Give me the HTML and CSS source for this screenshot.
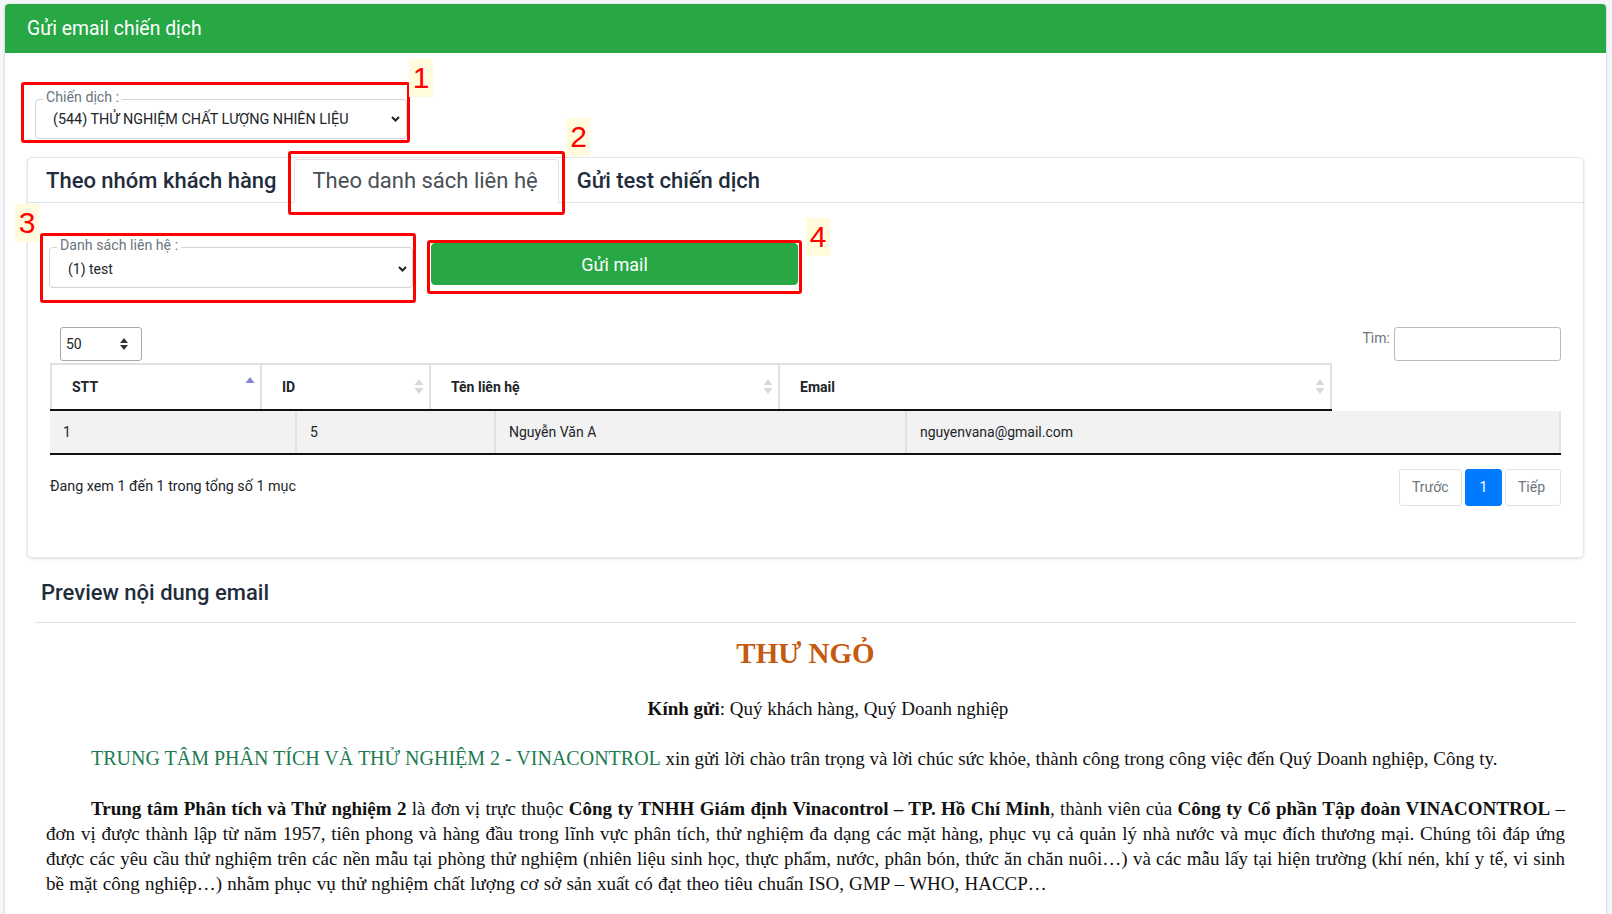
FILE: index.html
```html
<!DOCTYPE html>
<html lang="vi">
<head>
    <meta charset="UTF-8">
    <meta name="viewport" content="width=device-width, initial-scale=1.0">
    <title>Gửi email chiến dịch</title>
    <link rel="stylesheet" href="styles.css">
</head>
<body>
    <div class="wrapper">
        <div class="card card-main">
            <div class="card-header">Gửi email chiến dịch</div>

            <div class="card-body">
                <div class="mark mark-1">
                    <div class="field field-campaign">
                        <span class="field-label">Chiến dịch :</span>
                        <div class="fake-select">
                            <span>(544) THỬ NGHIỆM CHẤT LƯỢNG NHIÊN LIỆU</span>
                            <svg width="9" height="6" viewBox="0 0 9 6"><path d="M1 1 L4.5 4.5 L8 1" fill="none" stroke="#222" stroke-width="2"/></svg>
                        </div>
                    </div>
                    <span class="mark-num num-1">1</span>
                </div>

                <div class="card card-tabs">
                    <ul class="nav-tabs">
                        <li class="tab">Theo nhóm khách hàng</li>
                        <li class="tab active">
                            Theo danh sách liên hệ
                            <span class="mark-frame"></span>
                            <span class="mark-num num-2">2</span>
                        </li>
                        <li class="tab">Gửi test chiến dịch</li>
                    </ul>

                    <div class="tab-body">
                        <div class="send-row">
                            <div class="mark mark-3">
                                <div class="field field-list">
                                    <span class="field-label">Danh sách liên hệ :</span>
                                    <div class="fake-select">
                                        <span>(1) test</span>
                                        <svg width="9" height="6" viewBox="0 0 9 6"><path d="M1 1 L4.5 4.5 L8 1" fill="none" stroke="#222" stroke-width="2"/></svg>
                                    </div>
                                </div>
                                <span class="mark-num num-3">3</span>
                            </div>
                            <div class="mark mark-4">
                                <button class="btn-send">Gửi mail</button>
                                <span class="mark-num num-4">4</span>
                            </div>
                        </div>

                        <div class="dt-top">
                            <div class="dt-length">
                                <span>50</span>
                                <svg width="8" height="12" viewBox="0 0 8 12"><path d="M4 0 L8 5 L0 5Z M0 7 L8 7 L4 12Z" fill="#333"/></svg>
                            </div>
                            <div class="dt-search">
                                <label>Tìm:</label>
                                <div class="search-input"></div>
                            </div>
                        </div>

                        <div class="dt-head">
                            <div class="th th-stt">
                                <span>STT</span>
                                <svg class="sort-asc" width="10" height="16" viewBox="0 0 10 16"><path d="M5 1 L9.5 7 L0.5 7Z" fill="#8585d9"/></svg>
                            </div>
                            <div class="th th-id">
                                <span>ID</span>
                                <svg width="10" height="18" viewBox="0 0 10 18"><path d="M5 1 L9.5 7 L0.5 7Z M0.5 10 L9.5 10 L5 16Z" fill="#d8d8d8"/></svg>
                            </div>
                            <div class="th th-name">
                                <span>Tên liên hệ</span>
                                <svg width="10" height="18" viewBox="0 0 10 18"><path d="M5 1 L9.5 7 L0.5 7Z M0.5 10 L9.5 10 L5 16Z" fill="#d8d8d8"/></svg>
                            </div>
                            <div class="th th-email">
                                <span>Email</span>
                                <svg width="10" height="18" viewBox="0 0 10 18"><path d="M5 1 L9.5 7 L0.5 7Z M0.5 10 L9.5 10 L5 16Z" fill="#d8d8d8"/></svg>
                            </div>
                        </div>

                        <div class="dt-body">
                            <div class="td td-stt">1</div>
                            <div class="td td-id">5</div>
                            <div class="td td-name">Nguyễn Văn A</div>
                            <div class="td td-email">nguyenvana@gmail.com</div>
                        </div>

                        <div class="dt-bottom">
                            <div class="dt-info">Đang xem 1 đến 1 trong tổng số 1 mục</div>
                            <div class="pagination">
                                <span class="page prev">Trước</span>
                                <span class="page current">1</span>
                                <span class="page next">Tiếp</span>
                            </div>
                        </div>
                    </div>
                </div>

                <div class="preview">
                    <h3 class="preview-title">Preview nội dung email</h3>
                    <hr>
                    <div class="letter">
                        <h2 class="letter-title">THƯ NGỎ</h2>
                        <p class="greeting"><b>Kính gửi</b>: Quý khách hàng, Quý Doanh nghiệp</p>
                        <p class="indent"><span class="green">TRUNG TÂM PHÂN TÍCH VÀ THỬ NGHIỆM 2 - VINACONTROL</span> xin gửi lời chào trân trọng và lời chúc sức khỏe, thành công trong công việc đến Quý Doanh nghiệp, Công ty.</p>
                        <p class="indent intro"><b>Trung tâm Phân tích và Thử nghiệm 2</b> là đơn vị trực thuộc <b>Công ty TNHH Giám định Vinacontrol – TP. Hồ Chí Minh</b>, thành viên của <b>Công ty Cổ phần Tập đoàn VINACONTROL</b> – đơn vị được thành lập từ năm 1957, tiên phong và hàng đầu trong lĩnh vực phân tích, thử nghiệm đa dạng các mặt hàng, phục vụ cả quản lý nhà nước và mục đích thương mại. Chúng tôi đáp ứng được các yêu cầu thử nghiệm trên các nền mẫu tại phòng thử nghiệm (nhiên liệu sinh học, thực phẩm, nước, phân bón, thức ăn chăn nuôi…) và các mẫu lấy tại hiện trường (khí nén, khí y tế, vi sinh bề mặt công nghiệp…) nhằm phục vụ thử nghiệm chất lượng cơ sở sản xuất có đạt theo tiêu chuẩn ISO, GMP – WHO, HACCP…</p>
                    </div>
                </div>
            </div>
        </div>
    </div>
</body>
</html>
```

FILE: styles.css
```css
* {
    margin: 0;
    padding: 0;
    box-sizing: border-box;
}

body {
    font-family: Roboto, "Noto Sans", sans-serif;
    font-size: 14px;
    color: #212529;
    background: #f4f6f9;
}

.wrapper {
    padding: 4px 6px 0 5px;
}

.card-main {
    background: #fff;
    border-radius: 4px;
    box-shadow: 0 0 1px rgba(0, 0, 0, 0.125), 0 1px 3px rgba(0, 0, 0, 0.2);
    padding-bottom: 60px;
}

.card-header {
    height: 49px;
    line-height: 49px;
    padding-left: 22px;
    background: #28a745;
    color: #fff;
    font-size: 19.4px;
    border-radius: 4px 4px 0 0;
}

.card-body {
    padding: 29px 22px 0 22px;
}

/* red annotation frames */
.mark {
    position: relative;
    border: 3px solid #ff0000;
    border-radius: 3px;
}

.mark-num {
    position: absolute;
    width: 24px;
    height: 38px;
    line-height: 38px;
    text-align: center;
    background: #fffbdc;
    color: #ff0000;
    font-family: "Liberation Sans", Arial, sans-serif;
    font-size: 30px;
    font-weight: 400;
}

.mark-1 {
    width: 389px;
    margin-left: -6px;
    padding: 14px 0 1px 11px;
}

.num-1 { left: 385px; top: -26px; }
.num-2 { left: 271px; top: -42px; }
.num-3 { left: -28px; top: -32px; }
.num-4 { left: 376px; top: -25px; }

.field {
    position: relative;
    border: 1px solid #ced4da;
    border-radius: 4px;
}

.field-label {
    position: absolute;
    top: -11px;
    left: 7px;
    padding: 0 3px;
    background: #fff;
    color: #6c757d;
    font-size: 14.2px;
    line-height: 16px;
}

.fake-select {
    display: flex;
    align-items: center;
    justify-content: space-between;
    color: #212529;
    font-size: 14px;
}

.field-campaign {
    width: 372px;
    height: 40px;
}

.field-campaign .fake-select {
    height: 38px;
    padding: 0 6px 0 17px;
    font-size: 14.4px;
}

.field-list {
    width: 364px;
    height: 41px;
}

.field-list .fake-select {
    height: 39px;
    padding: 2px 5px 0 18px;
}

/* tabs card */
.card-tabs {
    margin-top: 14px;
    border: 1px solid #e3e6ea;
    border-radius: 5px;
    box-shadow: 0 1px 3px rgba(0, 0, 0, 0.12);
}

.nav-tabs {
    list-style: none;
    display: flex;
    padding-top: 1px;
    border-bottom: 1px solid #dee2e6;
}

.tab {
    position: relative;
    height: 44px;
    line-height: 42px;
    padding: 0 17px;
    margin-bottom: -1px;
    border: 1px solid transparent;
    border-bottom: none;
    font-size: 22px;
    font-weight: 500;
    color: #1f2d3d;
}

.tab.active {
    padding: 0 20px 0 17px;
    background: #fff;
    color: #495057;
    font-weight: 400;
    border-color: #dee2e6;
    border-radius: 4px 4px 0 0;
}

.mark-frame {
    position: absolute;
    left: -7px;
    right: -7px;
    top: -9px;
    bottom: -12px;
    border: 3px solid #ff0000;
    border-radius: 3px;
}

.tab-body {
    padding: 30px 22px 51px 22px;
}

.send-row {
    display: flex;
    align-items: flex-start;
    gap: 11px;
    margin-left: -10px;
}

.mark-3 {
    width: 376px;
    padding: 11px 0 12px 6px;
}

.mark-4 {
    width: 375px;
    margin-top: 7px;
    padding: 0 1px 6px 1px;
}

.btn-send {
    display: block;
    width: 100%;
    height: 42px;
    border: 1px solid #28a745;
    border-radius: 4px;
    background: #28a745;
    color: #fff;
    font-family: Roboto, sans-serif;
    font-size: 18px;
}

/* datatable */
.dt-top {
    display: flex;
    justify-content: space-between;
    align-items: flex-start;
    margin-top: 24px;
}

.dt-length {
    display: flex;
    align-items: center;
    justify-content: space-between;
    width: 82px;
    height: 34px;
    margin-left: 10px;
    padding: 0 13px 0 5px;
    border: 1px solid #aaa;
    border-radius: 3px;
}

.dt-search {
    display: flex;
    align-items: flex-start;
    gap: 4px;
}

.dt-search label {
    padding-top: 3px;
    color: #6c757d;
}

.search-input {
    width: 167px;
    height: 34px;
    border: 1px solid #b5bcc3;
    border-radius: 3px;
}

.dt-head {
    display: flex;
    width: 1282px;
    margin-top: 2px;
    border-top: 2px solid #dee2e6;
    border-bottom: 2px solid #111;
}

.th {
    display: flex;
    align-items: center;
    justify-content: space-between;
    height: 44px;
    padding: 0 5px 0 20px;
    border-left: 2px solid #dee2e6;
    font-weight: 700;
}

.th-stt { width: 210px; }
.th-id { width: 169px; }
.th-name { width: 349px; }
.th-email { width: 554px; border-right: 2px solid #dee2e6; }

.sort-asc {
    margin-top: -6px;
}

.dt-body {
    display: flex;
    background: #f2f2f2;
    border-bottom: 2px solid #111;
}

.td {
    height: 42px;
    line-height: 42px;
    padding-left: 13px;
    border-right: 2px solid #dee2e6;
}

.td-stt { width: 247px; }
.td-id { width: 199px; }
.td-name { width: 411px; }
.td-email { width: 654px; }

.dt-bottom {
    display: flex;
    justify-content: space-between;
    align-items: flex-start;
    margin-top: 14px;
}

.dt-info {
    padding-top: 7px;
    line-height: 21px;
    font-size: 14.3px;
}

.pagination {
    display: flex;
    gap: 3px;
}

.page {
    height: 37px;
    line-height: 35px;
    padding: 0 12px;
    border: 1px solid #dee2e6;
    border-radius: 3px;
    color: #6c757d;
}

.page.prev { width: 63px; }
.page.next { width: 56px; }

.page.current {
    width: 37px;
    text-align: center;
    padding: 0;
    background: #007bff;
    border-color: #007bff;
    color: #fff;
}

/* preview */
.preview {
    margin: 0 8px;
}

.preview-title {
    margin-top: 22px;
    padding-left: 6px;
    font-size: 22px;
    font-weight: 500;
    line-height: 26px;
    color: #1f2d3d;
}

.preview hr {
    margin-top: 16px;
    border: none;
    border-top: 1px solid #dee2e6;
}

.letter {
    padding: 0 11px;
    font-family: "Liberation Serif", "Times New Roman", serif;
    font-size: 19px;
    line-height: 25px;
    color: #111;
}

.letter-title {
    margin-top: 13px;
    text-align: center;
    font-size: 29px;
    line-height: 34px;
    color: #c55a11;
}

.letter p {
    margin-top: 25px;
}

.letter p.greeting {
    margin-top: 26px;
    text-align: center;
    text-indent: 45px;
}

.indent {
    text-indent: 45px;
    text-align: justify;
}

.intro {
    word-spacing: 0.45px;
}

.green {
    font-size: 20px;
    line-height: 1;
    color: #1e7b4f;
}
```
